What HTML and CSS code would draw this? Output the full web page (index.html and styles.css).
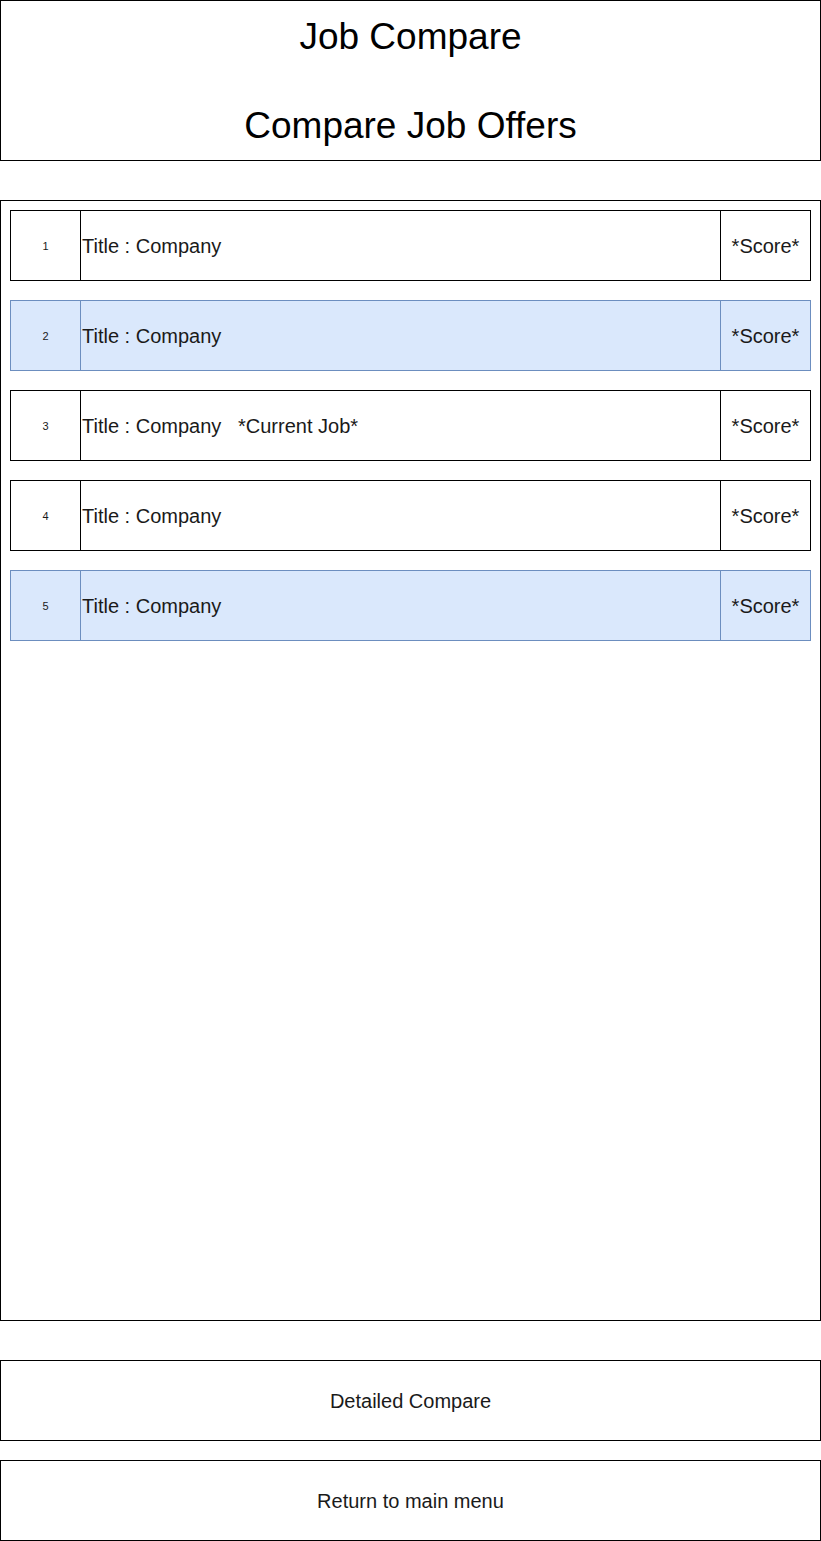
FILE: index.html
```html
<!DOCTYPE html>
<html>
<head>
<meta charset="utf-8">
<title>Job Compare</title>
<link rel="stylesheet" href="styles.css">
</head>
<body>
<div class="page">
  <header class="header">
    <div class="header-line">Job Compare</div>
    <div class="header-line">Compare Job Offers</div>
  </header>
  <section class="list">
    <div class="row">
      <div class="cell num">1</div>
      <div class="cell title">Title : Company</div>
      <div class="cell score">*Score*</div>
    </div>
    <div class="row selected">
      <div class="cell num">2</div>
      <div class="cell title">Title : Company</div>
      <div class="cell score">*Score*</div>
    </div>
    <div class="row">
      <div class="cell num">3</div>
      <div class="cell title">Title : Company   *Current Job*</div>
      <div class="cell score">*Score*</div>
    </div>
    <div class="row">
      <div class="cell num">4</div>
      <div class="cell title">Title : Company</div>
      <div class="cell score">*Score*</div>
    </div>
    <div class="row selected">
      <div class="cell num">5</div>
      <div class="cell title">Title : Company</div>
      <div class="cell score">*Score*</div>
    </div>
  </section>
  <div class="button first">Detailed Compare</div>
  <div class="button">Return to main menu</div>
</div>
</body>
</html>
```

FILE: styles.css
```css
* {
  box-sizing: border-box;
}
html, body {
  margin: 0;
  padding: 0;
  background: #ffffff;
}
body {
  font-family: "Liberation Sans", Arial, Helvetica, sans-serif;
  color: #000;
}
.page {
  width: 821px;
  display: flex;
  flex-direction: column;
}
.header {
  height: 161px;
  border: 1px solid #000;
  padding: 16px 0 14px;
  display: flex;
  flex-direction: column;
  gap: 49px;
  text-align: center;
}
.header-line {
  font-size: 37px;
  line-height: 40px;
  color: #000;
}
.list {
  margin-top: 39px;
  height: 1121px;
  border: 1px solid #000;
  padding: 9px;
  display: flex;
  flex-direction: column;
  gap: 19px;
}
.row {
  height: 71px;
  border: 1px solid #000;
  display: flex;
  color: #1a1a1a;
}
.row.selected {
  background: #dae8fc;
  border-color: #6c8ebf;
}
.cell {
  display: flex;
  align-items: center;
  padding-top: 2px;
}
.num {
  width: 69px;
  justify-content: center;
  font-size: 11px;
  padding-top: 1px;
}
.title {
  width: 640px;
  border-left: 1px solid #000;
  padding-left: 1px;
  font-size: 20px;
  white-space: pre;
}
.score {
  flex: 1;
  border-left: 1px solid #000;
  justify-content: center;
  font-size: 20px;
}
.row.selected .title,
.row.selected .score {
  border-left-color: #6c8ebf;
}
.button {
  height: 81px;
  border: 1px solid #000;
  display: flex;
  align-items: center;
  justify-content: center;
  padding-top: 2px;
  font-size: 20px;
  color: #1a1a1a;
  margin-top: 19px;
}
.button.first {
  margin-top: 39px;
}
```
